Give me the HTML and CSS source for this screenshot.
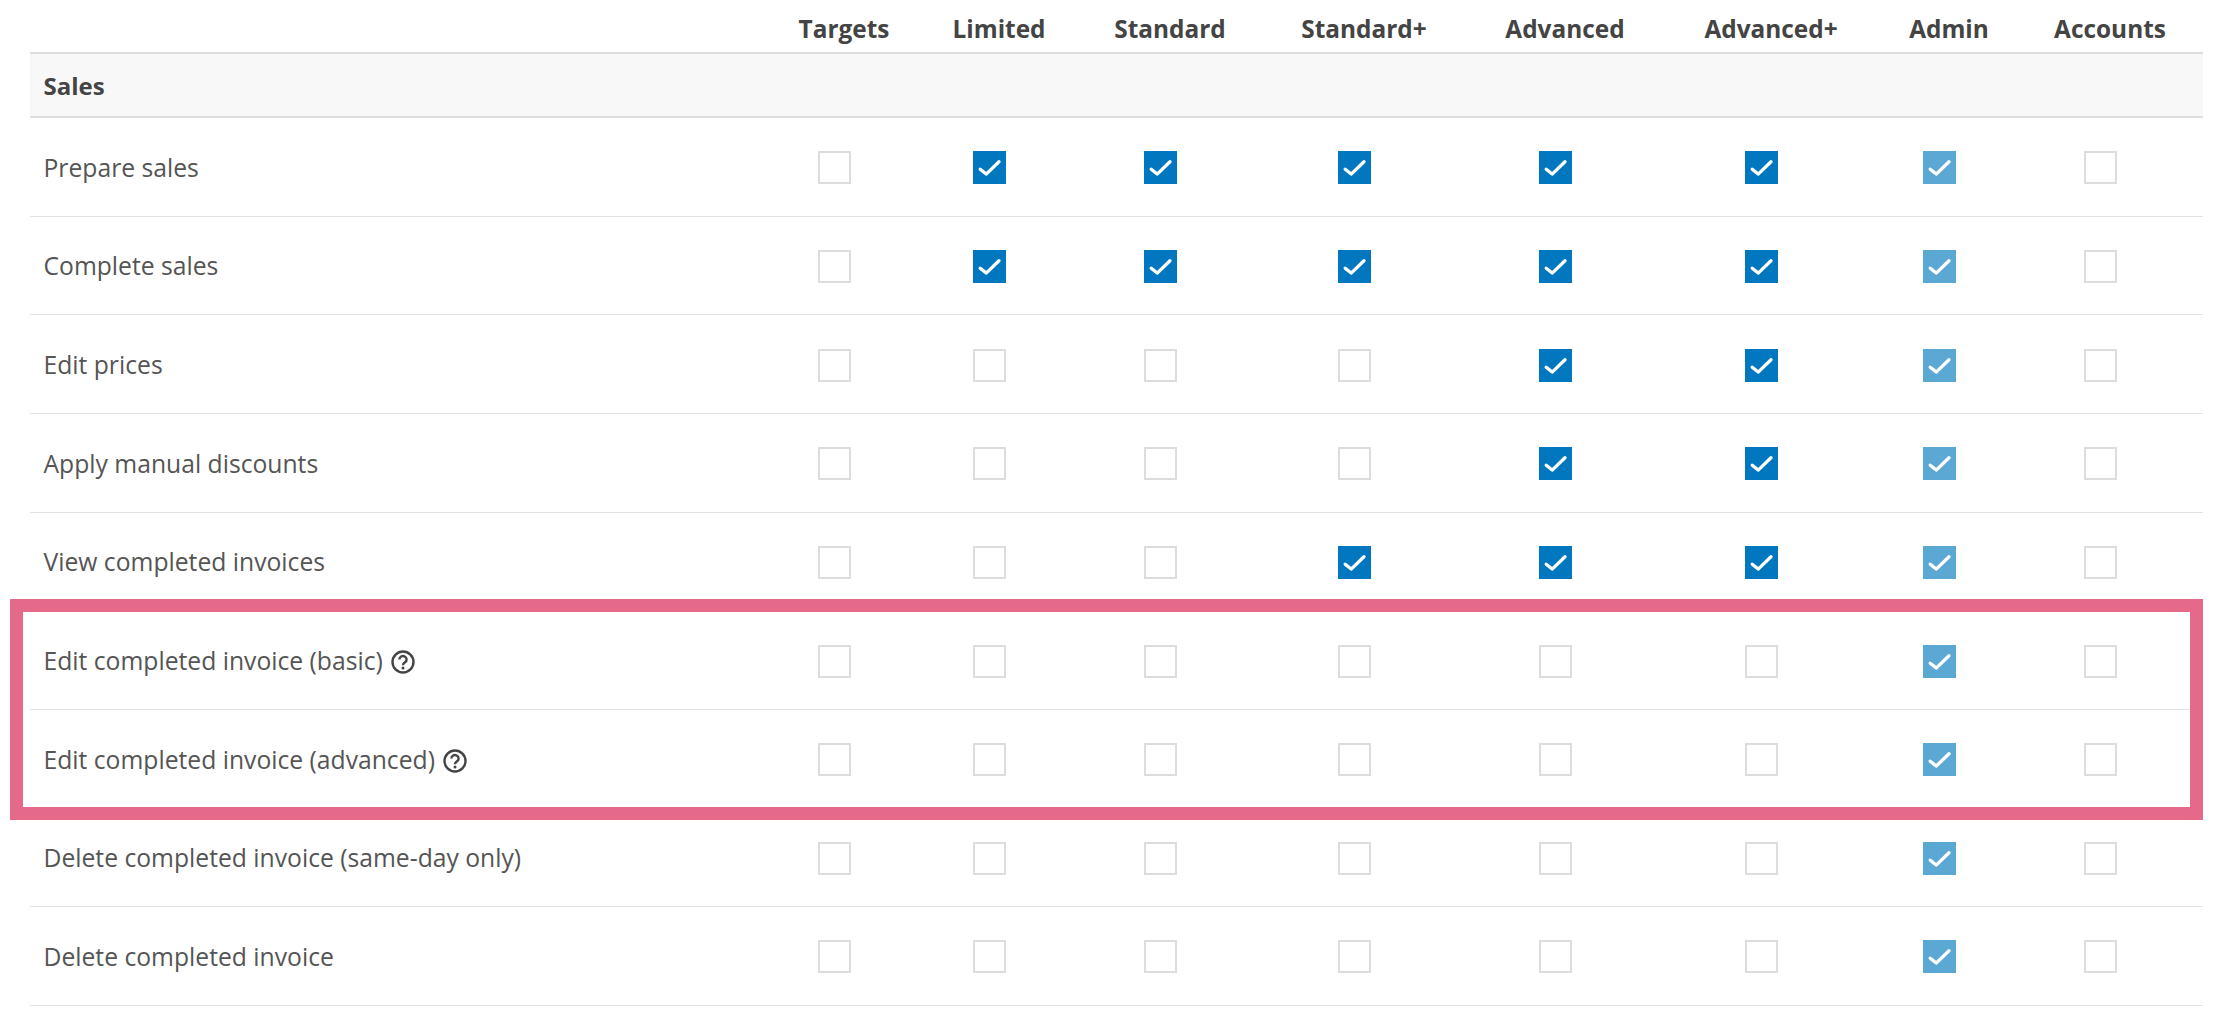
FILE: index.html
```html
<!DOCTYPE html>
<html lang="en">
<head>
<meta charset="utf-8">
<title>Permissions</title>
<link rel="stylesheet" href="styles.css">
</head>
<body>
<svg class="sprite" width="0" height="0" aria-hidden="true">
  <symbol id="tick" viewBox="0 0 32 32"><path d="M7 17.6 12.8 22.4 25.2 10.4" fill="none" stroke="#fff" stroke-width="3.2" stroke-linecap="round" stroke-linejoin="round"/></symbol>
  <symbol id="help" viewBox="0 0 24 24"><circle cx="12" cy="12" r="10.500" fill="none" stroke="#444" stroke-width="2.400"/><path d="M8.400 9.500a3.600 3.400 0 1 1 5.600 2.800c-1.300.9-2 1.500-2 2.900" fill="none" stroke="#444" stroke-width="2.400"/><circle cx="12" cy="18.100" r="1.500" fill="#444"/></symbol>
</svg>
<main class="page">
<table class="perms">
  <colgroup>
    <col class="c-name"><col class="c-targets"><col class="c-limited"><col class="c-standard"><col class="c-standardp"><col class="c-advanced"><col class="c-advancedp"><col class="c-admin"><col class="c-accounts">
  </colgroup>
  <thead>
    <tr class="head"><th></th><th>Targets</th><th>Limited</th><th>Standard</th><th>Standard+</th><th>Advanced</th><th>Advanced+</th><th>Admin</th><th>Accounts</th></tr>
  </thead>
  <tbody>
    <tr class="section"><th colspan="9">Sales</th></tr>
    <tr><td>Prepare sales</td><td><span class="box"></span></td><td><span class="box on"><svg><use href="#tick"/></svg></span></td><td><span class="box on"><svg><use href="#tick"/></svg></span></td><td><span class="box on"><svg><use href="#tick"/></svg></span></td><td><span class="box on"><svg><use href="#tick"/></svg></span></td><td><span class="box on"><svg><use href="#tick"/></svg></span></td><td><span class="box locked"><svg><use href="#tick"/></svg></span></td><td><span class="box"></span></td></tr>
    <tr><td>Complete sales</td><td><span class="box"></span></td><td><span class="box on"><svg><use href="#tick"/></svg></span></td><td><span class="box on"><svg><use href="#tick"/></svg></span></td><td><span class="box on"><svg><use href="#tick"/></svg></span></td><td><span class="box on"><svg><use href="#tick"/></svg></span></td><td><span class="box on"><svg><use href="#tick"/></svg></span></td><td><span class="box locked"><svg><use href="#tick"/></svg></span></td><td><span class="box"></span></td></tr>
    <tr><td>Edit prices</td><td><span class="box"></span></td><td><span class="box"></span></td><td><span class="box"></span></td><td><span class="box"></span></td><td><span class="box on"><svg><use href="#tick"/></svg></span></td><td><span class="box on"><svg><use href="#tick"/></svg></span></td><td><span class="box locked"><svg><use href="#tick"/></svg></span></td><td><span class="box"></span></td></tr>
    <tr><td>Apply manual discounts</td><td><span class="box"></span></td><td><span class="box"></span></td><td><span class="box"></span></td><td><span class="box"></span></td><td><span class="box on"><svg><use href="#tick"/></svg></span></td><td><span class="box on"><svg><use href="#tick"/></svg></span></td><td><span class="box locked"><svg><use href="#tick"/></svg></span></td><td><span class="box"></span></td></tr>
    <tr><td>View completed invoices</td><td><span class="box"></span></td><td><span class="box"></span></td><td><span class="box"></span></td><td><span class="box on"><svg><use href="#tick"/></svg></span></td><td><span class="box on"><svg><use href="#tick"/></svg></span></td><td><span class="box on"><svg><use href="#tick"/></svg></span></td><td><span class="box locked"><svg><use href="#tick"/></svg></span></td><td><span class="box"></span></td></tr>
    <tr><td>Edit completed invoice (basic)<svg class="help"><use href="#help"/></svg></td><td><span class="box"></span></td><td><span class="box"></span></td><td><span class="box"></span></td><td><span class="box"></span></td><td><span class="box"></span></td><td><span class="box"></span></td><td><span class="box locked"><svg><use href="#tick"/></svg></span></td><td><span class="box"></span></td></tr>
    <tr><td>Edit completed invoice (advanced)<svg class="help"><use href="#help"/></svg></td><td><span class="box"></span></td><td><span class="box"></span></td><td><span class="box"></span></td><td><span class="box"></span></td><td><span class="box"></span></td><td><span class="box"></span></td><td><span class="box locked"><svg><use href="#tick"/></svg></span></td><td><span class="box"></span></td></tr>
    <tr><td>Delete completed invoice (same-day only)</td><td><span class="box"></span></td><td><span class="box"></span></td><td><span class="box"></span></td><td><span class="box"></span></td><td><span class="box"></span></td><td><span class="box"></span></td><td><span class="box locked"><svg><use href="#tick"/></svg></span></td><td><span class="box"></span></td></tr>
    <tr><td>Delete completed invoice</td><td><span class="box"></span></td><td><span class="box"></span></td><td><span class="box"></span></td><td><span class="box"></span></td><td><span class="box"></span></td><td><span class="box"></span></td><td><span class="box locked"><svg><use href="#tick"/></svg></span></td><td><span class="box"></span></td></tr>
  </tbody>
</table>
<div class="highlight"></div>
</main>
</body>
</html>
```
FILE: styles.css
```css
html, body { margin: 0; padding: 0; background: #fff; }
body { overflow: hidden; height: 1018px; }
.sprite { position: absolute; }
.page {
  position: relative;
  padding-left: 30px;
  font-family: "Open Sans", sans-serif;
  font-size: 24.7px;
  color: #555;
}
.perms {
  width: 2173px;
  table-layout: fixed;
  border-collapse: separate;
  border-spacing: 0;
}
.c-name { width: 741px; }
.c-targets { width: 146px; }
.c-limited { width: 164px; }
.c-standard { width: 178px; }
.c-standardp { width: 210px; }
.c-advanced { width: 192px; }
.c-advancedp { width: 220px; }
.c-admin { width: 136px; }
.c-accounts { width: 186px; }
.perms th, .perms td { padding: 0; }
.perms .head th {
  box-sizing: border-box;
  border-bottom: 2px solid #ddd;
  height: 54px;
  padding-top: 4px;
  vertical-align: middle;
  text-align: center;
  font-weight: 700;
  font-size: 24.4px;
  color: #444;
}
.section th {
  height: 64px;
  box-sizing: border-box;
  border-bottom: 2px solid #ddd;
  background: #f8f8f8;
  text-align: left;
  padding-left: 13.5px;
  font-weight: 700;
  font-size: 24px;
  color: #444;
}
tbody td {
  height: 98.65px;
  box-sizing: border-box;
  border-bottom: 1.4px solid #e2e2e2;
  text-align: center;
  vertical-align: middle;
}
.perms tbody td:first-child { text-align: left; padding: 1px 0 0 13.5px; }
.perms tbody td:not(:first-child) { padding: 2px 19px 0 0; }
.box {
  display: block;
  box-sizing: border-box;
  width: 33px;
  height: 33px;
  margin: 0 auto;
  background: #fff;
  border: 2px solid #ddd;
}
.box svg { display: block; width: 33px; height: 33px; }
.box.on { background: #0077be; border: 0; }
.box.locked { background: #5ba8d5; border: 0; }
.help { display: inline-block; width: 24px; height: 24px; margin-left: 8px; vertical-align: -4px; }
.highlight {
  position: absolute;
  left: 10px;
  top: 599px;
  width: 2193px;
  height: 221px;
  box-sizing: border-box;
  border: 13px solid #e56a8a;
  pointer-events: none;
}
```
